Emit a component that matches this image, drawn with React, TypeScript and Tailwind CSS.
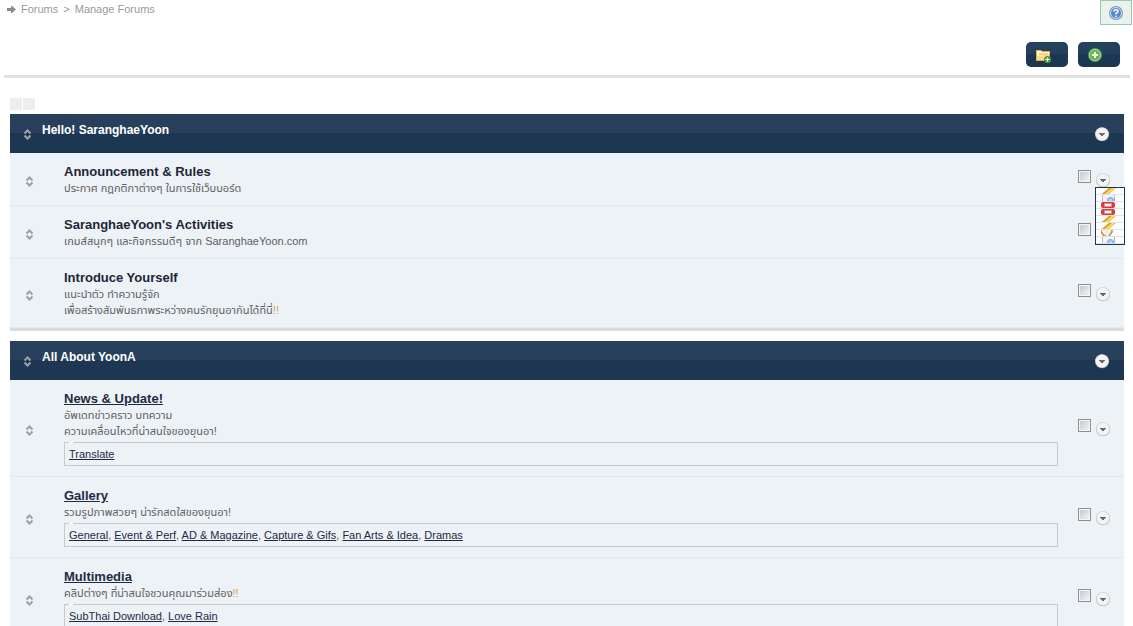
import type { ReactNode } from "react";

type Forum = {
  title: string;
  lines: string[];
  subs?: string[];
  menuOpen?: boolean;
};

type Category = {
  title: string;
  forums: Forum[];
};

const categories: Category[] = [
  {
    title: "Hello! SaranghaeYoon",
    forums: [
      {
        title: "Announcement & Rules",
        lines: ["ประกาศ กฎกติกาต่างๆ ในการใช้เว็บบอร์ด"],
        menuOpen: true,
      },
      {
        title: "SaranghaeYoon's Activities",
        lines: ["เกมส์สนุกๆ และกิจกรรมดีๆ จาก SaranghaeYoon.com"],
      },
      {
        title: "Introduce Yourself",
        lines: [
          "แนะนำตัว ทำความรู้จัก",
          "เพื่อสร้างสัมพันธภาพระหว่างคนรักยุนอากันได้ที่นี่!!",
        ],
      },
    ],
  },
  {
    title: "All About YoonA",
    forums: [
      {
        title: "News & Update!",
        lines: ["อัพเดทข่าวคราว บทความ", "ความเคลื่อนไหวที่น่าสนใจของยุนอา!"],
        subs: ["Translate"],
      },
      {
        title: "Gallery",
        lines: ["รวมรูปภาพสวยๆ น่ารักสดใสของยุนอา!"],
        subs: [
          "General",
          "Event & Perf",
          "AD & Magazine",
          "Capture & Gifs",
          "Fan Arts & Idea",
          "Dramas",
        ],
      },
      {
        title: "Multimedia",
        lines: ["คลิปต่างๆ ที่น่าสนใจชวนคุณมาร่วมส่อง!!"],
        subs: ["SubThai Download", "Love Rain"],
      },
    ],
  },
];

function SortHandle() {
  return (
    <svg
      width="7"
      height="13"
      viewBox="0 -2 7 13"
      className="shrink-0"
      fill="none"
      stroke="#a0a0a0"
      strokeWidth="2"
    >
      <path d="M0.5 4.5 3.5 1.5l3 3M0.5 6.5l3 3 3-3" />
    </svg>
  );
}

function MenuButton({ label }: { label: string }) {
  return (
    <button type="button" aria-label={label} className="block size-4">
      <svg width="16" height="16" viewBox="0 0 16 16">
        <circle cx="8" cy="8.3" r="7" fill="#b4b7ba" />
        <circle cx="8" cy="8" r="6.5" fill="#f3f3f3" />
        <path d="M5 7h6v1h-1v1H9v1H7V9H6V8H5z" fill="#6b6b6b" />
      </svg>
    </button>
  );
}

const pencil = (
  <>
    <path d="M1 6 8 0h7L8 6z" fill="#f4c33d" />
    <path d="M1 6 8 0h2L3 6z" fill="#d69a25" />
    <path d="M5 6l7-6h1L6 6z" fill="#fff0a8" />
  </>
);

const page = (
  <>
    <path d="M1 0h1v6H1zM13 0h1v6h-1z" fill="#b3bccb" />
    <path d="M2 0h11v6H2z" fill="#f1f4f8" />
    <path d="M6 6V4l2-2h3l2 2v2z" fill="#8fb8e8" />
    <path d="M8 4h3v2H8z" fill="#bcd6f4" />
  </>
);

const remove = (
  <>
    <rect x="0" y="0" width="14" height="6" rx="2" fill="#dc3a3a" />
    <rect x="3" y="1" width="8" height="4" fill="#f2807c" />
    <path d="M4 2h6v2H4z" fill="#fff" />
  </>
);

const bowl = (
  <>
    <path d="M0 0h11v2L9 6H3L0 3z" fill="#f3eee6" />
    <path d="M0 0v2l3 4h2M11 0v2L8 6" fill="none" stroke="#c58a42" strokeWidth="1.5" />
  </>
);

const menuItems = [
  { label: "Edit", icon: pencil },
  { label: "Permissions", icon: page },
  { label: "Delete", icon: remove },
  { label: "Empty", icon: remove },
  { label: "Rules", icon: pencil },
  { label: "Moderators", icon: pencil },
  { label: "Skin", icon: bowl },
  { label: "Resynchronise", icon: page },
];

function OptionsMenu() {
  return (
    <ul className="absolute top-[15px] left-0 z-10 w-[30px] border border-[#1d3652] bg-white">
      {menuItems.map((item) => (
        <li key={item.label} className="border-b border-[#dbe4ef]">
          <button type="button" aria-label={item.label} className="block w-full pl-[5px]">
            <svg width="15" height="6" viewBox="0 0 15 6" className="block">
              {item.icon}
            </svg>
          </button>
        </li>
      ))}
    </ul>
  );
}

function ActionButton({ label, children }: { label: string; children: ReactNode }) {
  return (
    <button
      type="button"
      aria-label={label}
      className="flex h-[25px] w-[42px] items-center rounded-[5px] bg-linear-to-b from-[#24405f] from-50% to-[#1d3652] to-50% pl-2"
    >
      {children}
    </button>
  );
}

// A closing "!!" gets its own accent colour
function Description({ text }: { text: string }) {
  const accented = text.endsWith("!!");
  return (
    <p>
      {accented ? text.slice(0, -2) : text}
      {accented && <span className="text-[#dc9a4a]">!!</span>}
    </p>
  );
}

function ForumRow({ forum }: { forum: Forum }) {
  return (
    <li className="flex items-center border-b border-[#e2e8ef] bg-[#edf2f7] pt-[11px] pr-[13px] pb-[9px] pl-4">
      <SortHandle />
      <div className="ml-[31px] min-w-0 flex-1">
        <h3 className="text-[13px] leading-4 font-bold text-[#1d2538]">
          {forum.subs ? (
            <a href="#" className="text-[#1d2b42] underline">
              {forum.title}
            </a>
          ) : (
            forum.title
          )}
        </h3>
        {forum.lines.map((line) => (
          <Description key={line} text={line} />
        ))}
        {forum.subs && (
          <div className="relative mt-[3px] mb-px min-h-6 border border-[#c9c9c9] px-1 leading-[22px]">
            <span className="absolute -top-px left-1 h-px w-1 bg-white" />
            {forum.subs.map((sub, i) => (
              <span key={sub}>
                {i > 0 && ", "}
                <a href="#" className="text-[#1d2b42] underline">
                  {sub}
                </a>
              </span>
            ))}
          </div>
        )}
      </div>
      <div className="ml-5 flex items-center gap-1">
        <input
          type="checkbox"
          aria-label={`Select ${forum.title}`}
          className="mb-[7px] size-[13px] appearance-none border border-[#8e8f8f] bg-linear-to-br from-[#c0c6d0] to-[#f6f6f6] shadow-[inset_0_0_0_1px_#f4f4f4]"
        />
        <div className="relative">
          <MenuButton label={`Options for ${forum.title}`} />
          {forum.menuOpen && <OptionsMenu />}
        </div>
      </div>
    </li>
  );
}

export default function App() {
  return (
    <div className="min-h-screen bg-white font-['Liberation_Sans','Noto_Sans_Thai',sans-serif] text-[11px] leading-4 text-[#606060]">
      <header className="mr-[3px] ml-1 border-b-[3px] border-[#e2e2e2] pb-2">
        <div className="flex items-start justify-between">
          <nav className="flex items-center gap-[5px] pt-px pl-[3px] text-[#999999]">
            <svg width="9" height="7" viewBox="0 0 9 7" fill="#8c8c8c">
              <path d="M0 2h4V0h1l4 3.5L5 7H4V5H0z" />
            </svg>
            <a href="#">Forums</a>
            <span>&gt;</span>
            <a href="#">Manage Forums</a>
          </nav>
          <button
            type="button"
            aria-label="Help"
            className="-mr-[2px] flex h-[25px] w-8 items-center justify-center border border-[#98cbaa] bg-[#e9f2ec]"
          >
            <svg width="14" height="14" viewBox="0 0 14 14">
              <circle cx="7" cy="7" r="7" fill="#7398d0" />
              <circle cx="7" cy="7" r="5.5" fill="#5b87c8" stroke="#d3e0f3" />
              <path
                d="M5 5.5Q5 3.7 7 3.7T9 5.4Q9 6.5 7 7.2V8.3M7 9.5V11"
                fill="none"
                stroke="#fff"
                strokeWidth="1.5"
              />
            </svg>
          </button>
        </div>
        <div className="mt-[17px] mr-[10px] flex justify-end gap-[10px]">
          <ActionButton label="New category">
            <svg width="18" height="16" viewBox="0 0 18 16">
              <path d="M2 3h5l1 1h8v10H2z" fill="#e3ae48" />
              <path d="M3 4h4l1 1h7v4H3z" fill="#fff6d5" />
              <path d="M5 7h9" stroke="#e3ae48" />
              <path d="M3 9h5l1-1h6v5H3z" fill="#fbdc80" />
              <circle cx="13.5" cy="12.5" r="3.5" fill="#4f9a3a" />
              <path d="M13.5 10.5v4M11.5 12.5h4" stroke="#fff" strokeWidth="1.2" />
            </svg>
          </ActionButton>
          <ActionButton label="New forum">
            <svg width="18" height="16" viewBox="0 0 18 16">
              <circle cx="9" cy="8" r="7" fill="#4c9c43" />
              <circle cx="9" cy="8" r="5.7" fill="#66b656" stroke="#a9d79c" />
              <path d="M9 5v6M6 8h6" stroke="#fff" strokeWidth="2" />
            </svg>
          </ActionButton>
        </div>
      </header>

      <main className="mt-5 mr-[9px] ml-[10px]">
        <div className="mb-1 flex gap-px">
          <span className="size-3 bg-[#eeeeee]" />
          <span className="size-3 bg-[#eeeeee]" />
        </div>
        {categories.map((category) => (
          <section
            key={category.title}
            className="mb-[10px] border-b-[3px] border-[#d5dde5]"
          >
            <div className="flex h-[39px] items-center bg-linear-to-b from-[#29405c] from-50% to-[#1d3652] to-50% px-[14px]">
              <SortHandle />
              <h2 className="mb-2 ml-[11px] flex-1 text-[12px] font-bold text-white">
                {category.title}
              </h2>
              <MenuButton label={`Options for ${category.title}`} />
            </div>
            <ul>
              {category.forums.map((forum) => (
                <ForumRow key={forum.title} forum={forum} />
              ))}
            </ul>
          </section>
        ))}
      </main>
    </div>
  );
}
